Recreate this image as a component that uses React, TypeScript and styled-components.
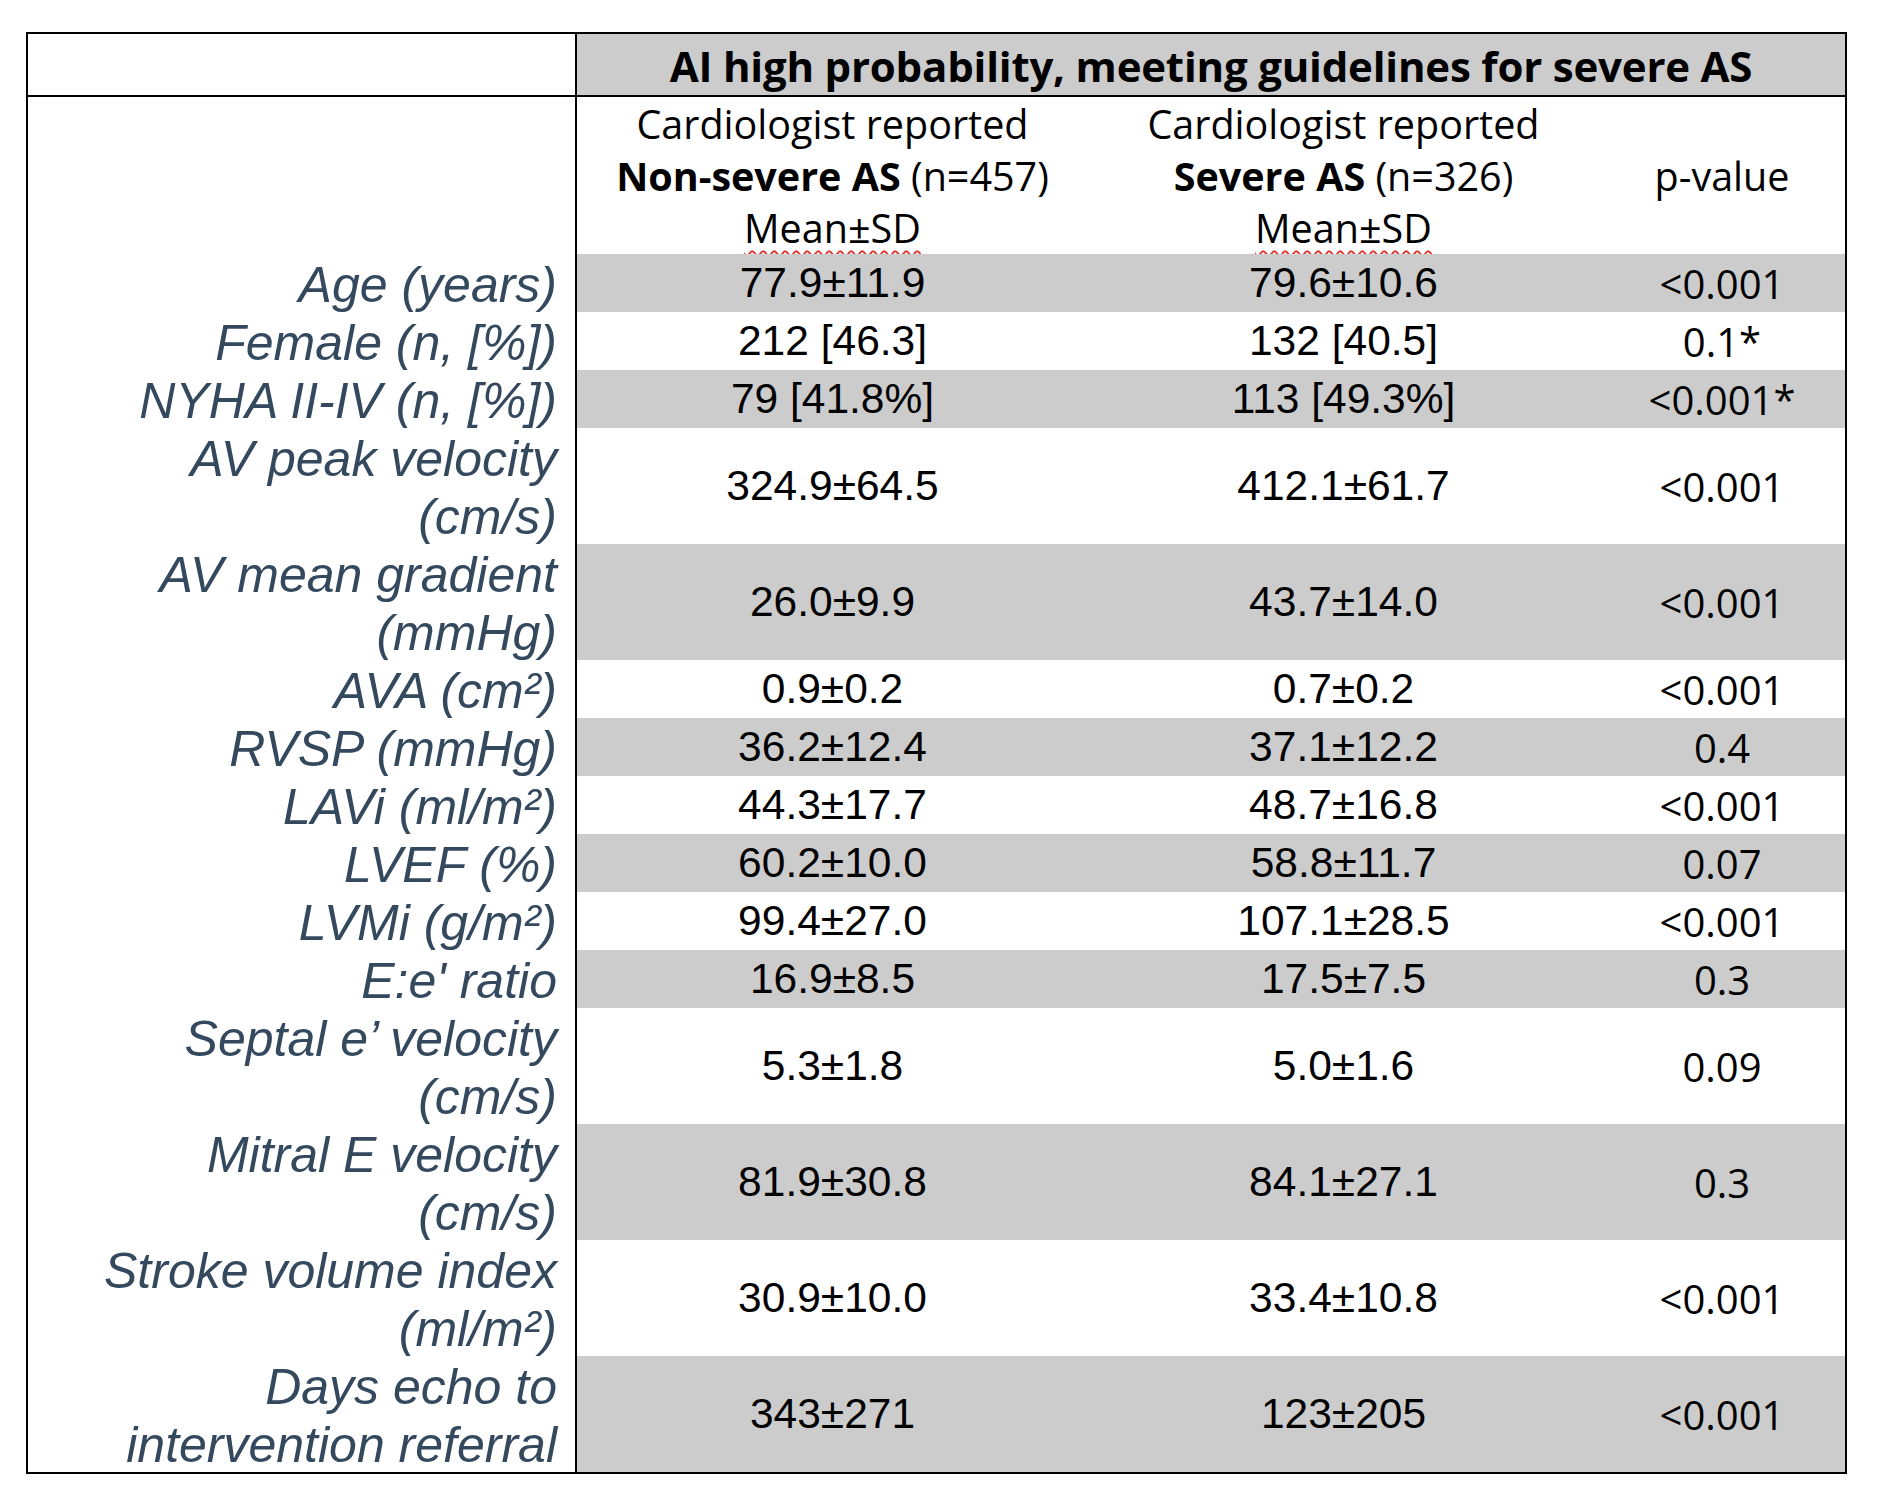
import React from "react";
import styled, {createGlobalStyle} from "styled-components";

const COLS = "549px 511px 511px 1fr";
const UNIT = 58;

const GlobalStyle = createGlobalStyle`
  html, body {
    margin: 0;
    padding: 0;
    background: #ffffff;
  }
`

const Page = styled.div`
  padding: 32px 0 0 26px;
  width: 1821px;
`

const Table = styled.div`
  border: 2px solid #000;
  width: 1821px;
  box-sizing: border-box;
  display: flex;
  flex-direction: column;
`

const HeadRow = styled.div`
  display: grid;
  grid-template-columns: 549px 1fr;
  height: 63px;
  border-bottom: 2px solid #000;
  box-sizing: border-box;
`

const Corner = styled.div`
  border-right: 2px solid #000;
`

const Title = styled.div`
  background: #cccccc;
  display: flex;
  align-items: center;
  justify-content: center;
  font-family: "Open Sans", "Liberation Sans", sans-serif;
  font-weight: 700;
  font-size: 42px;
  letter-spacing: -0.2px;
  color: #000;
  padding-top: 1px;
`

const SubRow = styled.div`
  display: grid;
  grid-template-columns: ${COLS};
  grid-template-rows: 100%;
  height: 157px;
`

const SubCell = styled.div`
  display: flex;
  flex-direction: column;
  align-items: center;
  justify-content: center;
  font-family: "Open Sans", "Liberation Sans", sans-serif;
  font-size: 39.5px;
  line-height: 52px;
  color: #000;
  min-height: 0;
`

const SubLine = styled.span`
  white-space: nowrap;
  b {
    font-weight: 700;
  }
`

const Squiggle = styled.span`
  text-decoration: underline wavy #e0352b;
  text-decoration-thickness: 1.5px;
  text-underline-offset: 7px;
`

const Row = styled.div<{ $tall?: boolean }>`
  display: grid;
  grid-template-columns: ${COLS};
  grid-template-rows: 100%;
  height: ${p => (p.$tall ? UNIT * 2 : UNIT)}px;
`

const Label = styled.div`
  border-right: 2px solid #000;
  display: flex;
  flex-direction: column;
  justify-content: center;
  align-items: flex-end;
  padding: 3px 18px 0 0;
  min-height: 0;
  font-family: "Liberation Sans", Arial, sans-serif;
  font-style: italic;
  font-size: 50px;
  line-height: 58px;
  color: #34495e;
  white-space: nowrap;
`

const Value = styled.div<{ $p?: boolean; $shaded?: boolean }>`
  display: flex;
  align-items: center;
  justify-content: center;
  min-height: 0;
  background: ${p => (p.$shaded ? "#cccccc" : "transparent")};
  font-family: ${p => (p.$p ? `"Open Sans", "Liberation Sans", sans-serif` : `"Liberation Sans", Arial, sans-serif`)};
  font-size: ${p => (p.$p ? 40 : 42.5)}px;
  color: #000;
  white-space: nowrap;
`

type Item = {
    label: string[];
    a: string;
    b: string;
    p: string;
};

const rows: Item[] = [
    {label: ["Age (years)"], a: "77.9±11.9", b: "79.6±10.6", p: "<0.001"},
    {label: ["Female (n, [%])"], a: "212 [46.3]", b: "132 [40.5]", p: "0.1*"},
    {label: ["NYHA II-IV (n, [%])"], a: "79 [41.8%]", b: "113 [49.3%]", p: "<0.001*"},
    {label: ["AV peak velocity", "(cm/s)"], a: "324.9±64.5", b: "412.1±61.7", p: "<0.001"},
    {label: ["AV mean gradient", "(mmHg)"], a: "26.0±9.9", b: "43.7±14.0", p: "<0.001"},
    {label: ["AVA (cm²)"], a: "0.9±0.2", b: "0.7±0.2", p: "<0.001"},
    {label: ["RVSP (mmHg)"], a: "36.2±12.4", b: "37.1±12.2", p: "0.4"},
    {label: ["LAVi (ml/m²)"], a: "44.3±17.7", b: "48.7±16.8", p: "<0.001"},
    {label: ["LVEF (%)"], a: "60.2±10.0", b: "58.8±11.7", p: "0.07"},
    {label: ["LVMi (g/m²)"], a: "99.4±27.0", b: "107.1±28.5", p: "<0.001"},
    {label: ["E:e' ratio"], a: "16.9±8.5", b: "17.5±7.5", p: "0.3"},
    {label: ["Septal e’ velocity", "(cm/s)"], a: "5.3±1.8", b: "5.0±1.6", p: "0.09"},
    {label: ["Mitral E velocity", "(cm/s)"], a: "81.9±30.8", b: "84.1±27.1", p: "0.3"},
    {label: ["Stroke volume index", "(ml/m²)"], a: "30.9±10.0", b: "33.4±10.8", p: "<0.001"},
    {label: ["Days echo to", "intervention referral"], a: "343±271", b: "123±205", p: "<0.001"},
];

const App = () => {
    return (
        <Page>
            <GlobalStyle/>
            <Table>
                <HeadRow>
                    <Corner/>
                    <Title>AI high probability, meeting guidelines for severe AS</Title>
                </HeadRow>
                <SubRow>
                    <Label/>
                    <SubCell>
                        <SubLine>Cardiologist reported</SubLine>
                        <SubLine><b>Non-severe AS</b> (n=457)</SubLine>
                        <SubLine><Squiggle>Mean±SD</Squiggle></SubLine>
                    </SubCell>
                    <SubCell>
                        <SubLine>Cardiologist reported</SubLine>
                        <SubLine><b>Severe AS</b> (n=326)</SubLine>
                        <SubLine><Squiggle>Mean±SD</Squiggle></SubLine>
                    </SubCell>
                    <SubCell>
                        <SubLine>p-value</SubLine>
                    </SubCell>
                </SubRow>
                {rows.map((r, i) => {
                    const shaded = i % 2 === 0;
                    return (
                        <Row key={r.label[0]} $tall={r.label.length > 1}>
                            <Label>
                                {r.label.map(line => <span key={line}>{line}</span>)}
                            </Label>
                            <Value $shaded={shaded}>{r.a}</Value>
                            <Value $shaded={shaded}>{r.b}</Value>
                            <Value $shaded={shaded} $p>{r.p}</Value>
                        </Row>
                    );
                })}
            </Table>
        </Page>
    );
}

export default App;
